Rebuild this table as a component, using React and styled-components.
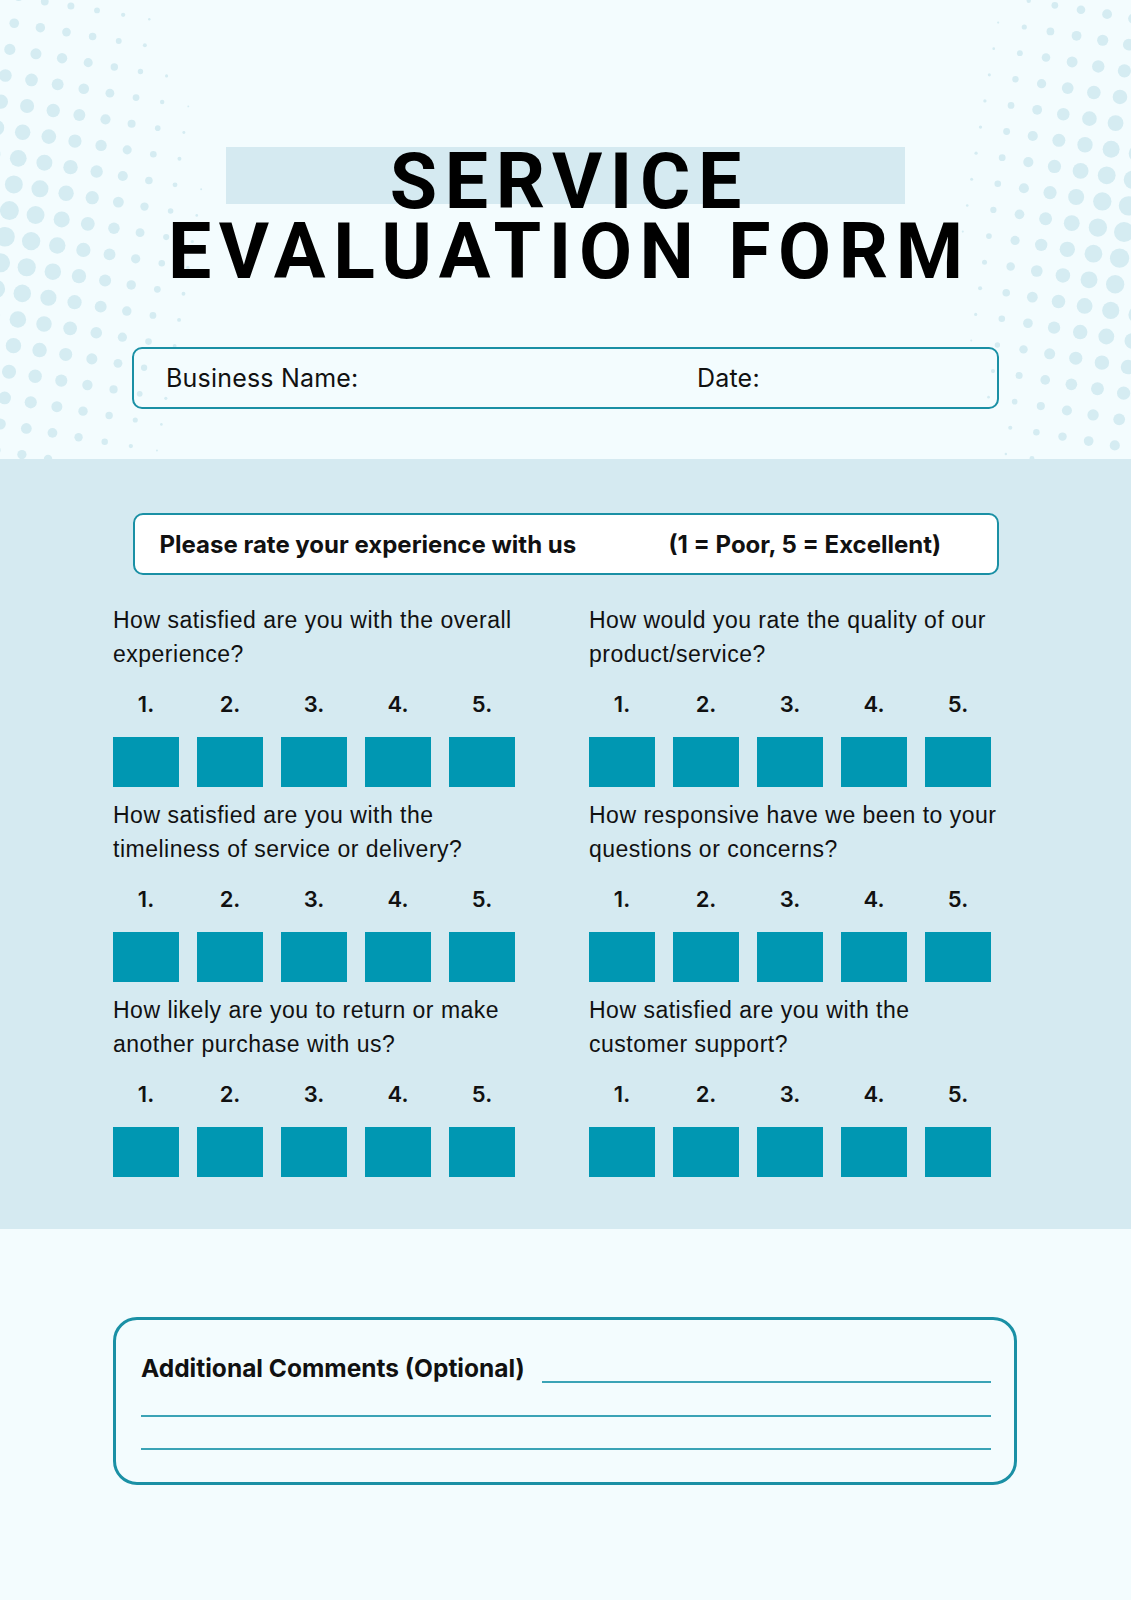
import React from "react";
import styled, { createGlobalStyle } from "styled-components";

const GlobalStyle = createGlobalStyle`
  html, body {
    margin: 0;
    padding: 0;
    background: #f3fcfe;
  }
  * {
    box-sizing: border-box;
  }
`;

const TEAL = "#0097b2";
const BORDER = "#1a90a5";
const PANEL = "#d5eaf1";

const questions = [
  ["How satisfied are you with the overall", "experience?"],
  ["How would you rate the quality of our", "product/service?"],
  ["How satisfied are you with the", "timeliness of service or delivery?"],
  ["How responsive have we been to your", "questions or concerns?"],
  ["How likely are you to return or make", "another purchase with us?"],
  ["How satisfied are you with the", "customer support?"]
];

// halftone corner: a slightly tilted dot lattice, dots shrink away from the focus
const makeDots = (fx, fy, ax, ay, maxR) => {
  const dots = [];
  const s = 26.5;
  const a = (9.6 * Math.PI) / 180;
  const c = Math.cos(a);
  const sn = Math.sin(a);
  for (let i = -14; i <= 14; i++) {
    for (let j = -14; j <= 14; j++) {
      const x = fx + i * s * c - j * s * sn;
      const y = fy + i * s * sn + j * s * c;
      const dx = (x - fx) / ax;
      const dy = (y - fy) / ay;
      const d = Math.sqrt(dx * dx + dy * dy);
      if (d >= 1) continue;
      const r = maxR * (1 - Math.pow(d, 1.3));
      if (r > 0.9 && y > -10 && y < 465) dots.push({ x, y, r });
    }
  }
  return dots;
};

const leftDots = makeDots(5, 236.7, 215, 360, 9.8);
const rightDots = makeDots(1124, 232, 175, 370, 10);

const Page = styled.div`
  width: 1131px;
  min-height: 1600px;
  background: #f3fcfe;
`;

const Header = styled.header`
  position: relative;
  height: 459px;
  padding-top: 147px;
  overflow: hidden;
`;

const Dots = styled.svg`
  position: absolute;
  top: 0;
  left: 0;
  width: 1131px;
  height: 459px;
  pointer-events: none;
`;

const Title = styled.h1`
  position: relative;
  margin: 0;
  font-family: Roboto, "Liberation Sans", sans-serif;
  font-weight: 700;
  font-size: 77px;
  line-height: 70px;
  letter-spacing: 7.6px;
  color: #000;
  text-align: center;
`;

const TitleLine = styled.span`
  display: block;
  width: ${p => (p.$marked ? "679px" : "auto")};
  margin: 0 auto;
  padding-left: 7.6px;
  background: ${p =>
    p.$marked
      ? `linear-gradient(to bottom, ${PANEL} 0, ${PANEL} 57px, transparent 57px)`
      : "none"};
`;

const InfoBox = styled.div`
  position: relative;
  display: grid;
  grid-template-columns: 531px 1fr;
  align-items: center;
  width: 867px;
  height: 62px;
  margin: 60px auto 0;
  padding-left: 32px;
  border: 2.5px solid ${BORDER};
  border-radius: 10px;
  font-family: Inter, "Liberation Sans", sans-serif;
  font-size: 25px;
  letter-spacing: 0.2px;
  color: #111;
`;

const Panel = styled.section`
  background: ${PANEL};
  padding: 54px 0 52px;
`;

const RateBar = styled.div`
  display: grid;
  grid-template-columns: 509px 1fr;
  align-items: center;
  width: 866px;
  height: 62px;
  margin: 0 auto;
  padding-left: 25px;
  background: #fff;
  border: 2.5px solid ${BORDER};
  border-radius: 10px;
  font-family: Inter, "Liberation Sans", sans-serif;
  font-weight: 700;
  font-size: 24px;
  color: #111;
`;

const Grid = styled.div`
  display: grid;
  grid-template-columns: 410px 410px;
  column-gap: 66px;
  row-gap: 11.4px;
  margin: 28.4px 0 0 113px;
`;

const Question = styled.div`
  display: flex;
  flex-direction: column;
`;

const Prompt = styled.p`
  margin: 0;
  font-family: "Liberation Sans", Arial, sans-serif;
  font-size: 23px;
  line-height: 34px;
  letter-spacing: 0.5px;
  color: #111;
  white-space: nowrap;
`;

const Options = styled.div`
  display: flex;
  gap: 18px;
  margin-top: 17.6px;
`;

const Option = styled.div`
  display: flex;
  flex-direction: column;
  align-items: center;
  gap: 18px;
`;

const Num = styled.span`
  font-family: Inter, "Liberation Sans", sans-serif;
  font-weight: 600;
  font-size: 22px;
  line-height: 30px;
  color: #111;
`;

const Box = styled.div`
  width: 66px;
  height: 50px;
  background: ${TEAL};
`;

const Footer = styled.section`
  padding-top: 88px;
`;

const Comments = styled.div`
  width: 904px;
  margin-left: 113px;
  padding: 33.1px 23px 32.5px 25px;
  border: 3px solid ${BORDER};
  border-radius: 24px;
`;

const CommentHead = styled.div`
  display: flex;
  align-items: flex-end;
  gap: 17px;
`;

const CommentLabel = styled.span`
  font-family: Inter, "Liberation Sans", sans-serif;
  font-weight: 700;
  font-size: 24.5px;
  line-height: 30px;
  color: #111;
  white-space: nowrap;
`;

const Rule = styled.div`
  flex: 1;
  height: 2px;
  background: #3aa3b6;
  margin-top: ${p => p.$gap || 0}px;
`;

const Rating = ({ lines }) => (
  <Question>
    <Prompt>
      {lines[0]}
      <br />
      {lines[1]}
    </Prompt>
    <Options>
      {[1, 2, 3, 4, 5].map(n => (
        <Option key={n}>
          <Num>{n}.</Num>
          <Box />
        </Option>
      ))}
    </Options>
  </Question>
);

export default function App() {
  return (
    <Page>
      <GlobalStyle />
      <Header>
        <Dots viewBox="0 0 1131 459">
          {leftDots.concat(rightDots).map((d, i) => (
            <circle key={i} cx={d.x} cy={d.y} r={d.r} fill="#d5ecf2" />
          ))}
        </Dots>
        <Title>
          <TitleLine $marked>SERVICE</TitleLine>
          <TitleLine>EVALUATION FORM</TitleLine>
        </Title>
        <InfoBox>
          <span>Business Name:</span>
          <span>Date:</span>
        </InfoBox>
      </Header>

      <Panel>
        <RateBar>
          <span>Please rate your experience with us</span>
          <span>(1 = Poor, 5 = Excellent)</span>
        </RateBar>
        <Grid>
          {questions.map((q, i) => (
            <Rating key={i} lines={q} />
          ))}
        </Grid>
      </Panel>

      <Footer>
        <Comments>
          <CommentHead>
            <CommentLabel>Additional Comments (Optional)</CommentLabel>
            <Rule />
          </CommentHead>
          <Rule $gap={31.5} />
          <Rule $gap={31} />
        </Comments>
      </Footer>
    </Page>
  );
}
